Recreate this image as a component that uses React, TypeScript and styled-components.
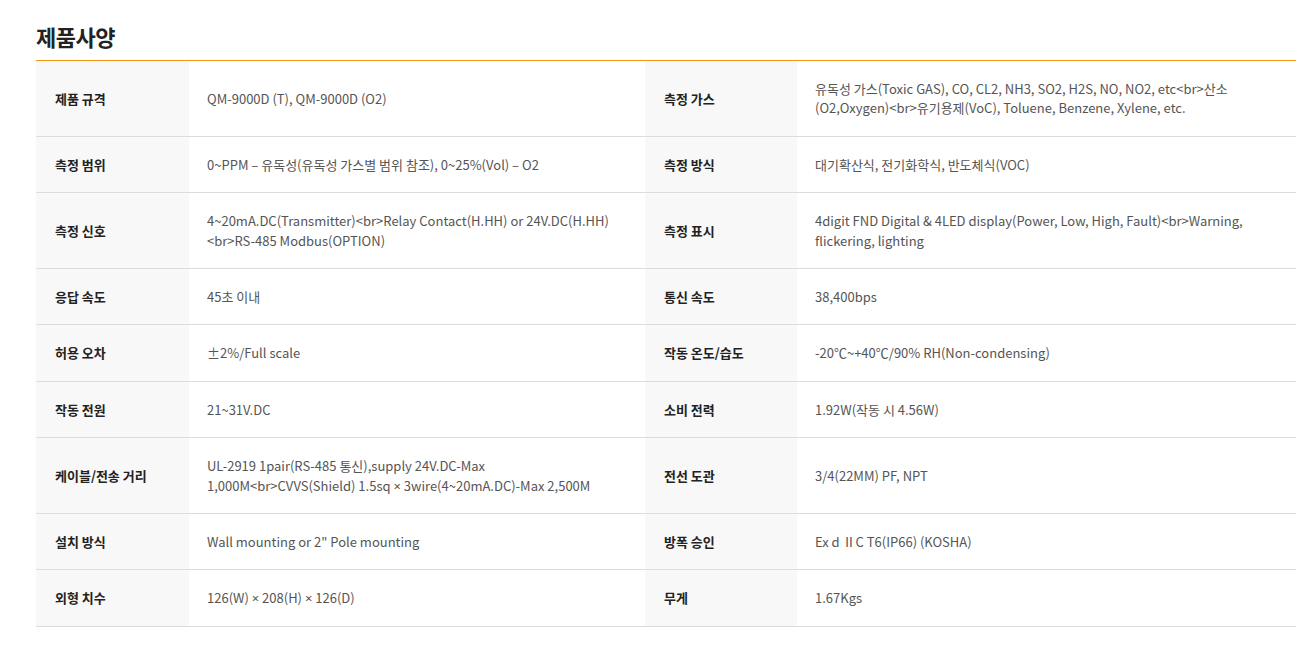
import React from 'react'
import styled, { createGlobalStyle } from 'styled-components'

interface Spec {
  label: string
  value: string
}

const rows: [Spec, Spec][] = [
  [
    { label: '제품 규격', value: 'QM-9000D (T), QM-9000D (O2)' },
    { label: '측정 가스', value: '유독성 가스(Toxic GAS), CO, CL2, NH3, SO2, H2S, NO, NO2, etc<br>산소(O2,Oxygen)<br>유기용제(VoC), Toluene, Benzene, Xylene, etc.' },
  ],
  [
    { label: '측정 범위', value: '0~PPM – 유독성(유독성 가스별 범위 참조), 0~25%(Vol) – O2' },
    { label: '측정 방식', value: '대기확산식, 전기화학식, 반도체식(VOC)' },
  ],
  [
    { label: '측정 신호', value: '4~20mA.DC(Transmitter)<br>Relay Contact(H.HH) or 24V.DC(H.HH)<br>RS-485 Modbus(OPTION)' },
    { label: '측정 표시', value: '4digit FND Digital & 4LED display(Power, Low, High, Fault)<br>Warning, flickering, lighting' },
  ],
  [
    { label: '응답 속도', value: '45초 이내' },
    { label: '통신 속도', value: '38,400bps' },
  ],
  [
    { label: '허용 오차', value: '±2%/Full scale' },
    { label: '작동 온도/습도', value: '-20℃~+40℃/90% RH(Non-condensing)' },
  ],
  [
    { label: '작동 전원', value: '21~31V.DC' },
    { label: '소비 전력', value: '1.92W(작동 시 4.56W)' },
  ],
  [
    { label: '케이블/전송 거리', value: 'UL-2919 1pair(RS-485 통신),supply 24V.DC-Max 1,000M<br>CVVS(Shield) 1.5sq × 3wire(4~20mA.DC)-Max 2,500M' },
    { label: '전선 도관', value: '3/4(22MM) PF, NPT' },
  ],
  [
    { label: '설치 방식', value: 'Wall mounting or 2" Pole mounting' },
    { label: '방폭 승인', value: 'Ex d  ⅡC T6(IP66) (KOSHA)' },
  ],
  [
    { label: '외형 치수', value: '126(W) × 208(H) × 126(D)' },
    { label: '무게', value: '1.67Kgs' },
  ],
]

// the CJK font draws × full width; the page shows a narrow latin one
const renderValue = (text: string) =>
  text.split('×').map((part, i) => (
    <React.Fragment key={i}>
      {i > 0 && <Times>×</Times>}
      {part}
    </React.Fragment>
  ))

const App: React.FC = () => {
  return (
    <>
      <GlobalStyle />
      <Section>
        <Title>제품사양</Title>
        <SpecTable>
          <colgroup>
            <col style={{ width: 153 }} />
            <col style={{ width: 456 }} />
            <col style={{ width: 152 }} />
            <col />
          </colgroup>
          <tbody>
            {rows.map(([left, right]) => (
              <tr key={left.label}>
                <Label>{left.label}</Label>
                <Value>{renderValue(left.value)}</Value>
                <Label>{right.label}</Label>
                <Value>{renderValue(right.value)}</Value>
              </tr>
            ))}
          </tbody>
        </SpecTable>
      </Section>
    </>
  )
}

const GlobalStyle = createGlobalStyle`
  body {
    margin: 0;
    background: #fff;
    font-family: 'Noto Sans CJK KR', 'Noto Sans', sans-serif;
  }
`

const Section = styled.section`
  padding: 23px 7px 0 36px;
`

const Title = styled.h2`
  margin: 0 0 11px;
  font-size: 22px;
  line-height: 26px;
  font-weight: 700;
  color: #222;
  letter-spacing: -0.5px;
`

const SpecTable = styled.table`
  width: 100%;
  border-collapse: collapse;
  table-layout: fixed;
  border-top: 1px solid #f39414;
`

const Label = styled.th`
  padding: 18px 18px 18px 19px;
  background: #f8f8f8;
  border-bottom: 1px solid #dcdcdc;
  text-align: left;
  font-size: 13px;
  line-height: 19.4px;
  font-weight: 700;
  color: #222;
`

const Value = styled.td`
  padding: 18px 30px 18px 18px;
  border-bottom: 1px solid #dcdcdc;
  font-size: 13px;
  line-height: 19.4px;
  color: #555;
  word-break: normal;
  overflow-wrap: normal;
`

const Times = styled.span`
  font-family: 'Noto Sans', sans-serif;
  line-height: 1;
`

export default App
